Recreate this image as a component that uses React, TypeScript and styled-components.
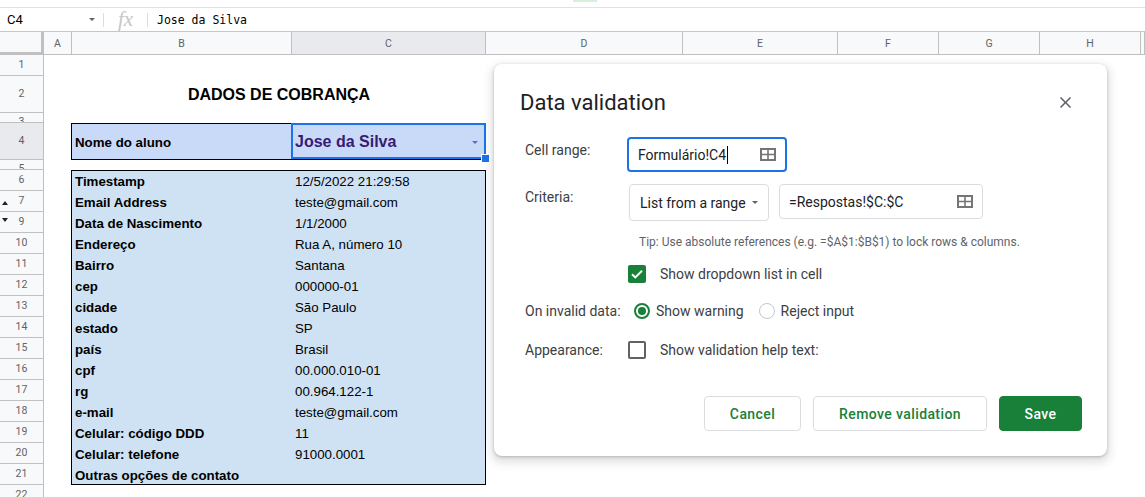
import React from 'react';
import styled, { createGlobalStyle } from 'styled-components';

const GlobalStyle = createGlobalStyle`
  html, body { margin: 0; padding: 0; background: #fff; }
  body { font-family: Roboto, "Liberation Sans", Arial, sans-serif; }
  * { box-sizing: border-box; }
`;

const Page = styled.div`
  position: relative;
  width: 1145px;
  height: 497px;
  overflow: hidden;
  background: #fff;
`;

const TopStrip = styled.div`
  height: 8px;
  border-bottom: 1px solid #e0e2e5;
  padding-left: 573px;
`;

const TabHint = styled.div`
  width: 24px;
  height: 2px;
  background: #d7eedd;
`;

const FormulaBar = styled.div`
  display: flex;
  align-items: center;
  height: 24px;
  border-bottom: 1px solid #c4c7c5;
`;

const NameBox = styled.div`
  width: 103px;
  display: flex;
  align-items: center;
  justify-content: space-between;
  padding: 0 8px 0 7px;
  font-family: Roboto, sans-serif;
  font-size: 13px;
  color: #000;
`;

const Caret = styled.span<{ $color?: string; $size?: number }>`
  width: 0;
  height: 0;
  border-left: ${p => p.$size ?? 3.5}px solid transparent;
  border-right: ${p => p.$size ?? 3.5}px solid transparent;
  border-top: ${p => p.$size ?? 3.5}px solid ${p => p.$color ?? '#5f6368'};
`;

const BarDivider = styled.div`
  width: 1px;
  height: 14px;
  background: #dadce0;
`;

const FxBox = styled.div`
  width: 43px;
  text-align: center;
  font-family: "Liberation Serif", "DejaVu Serif", serif;
  font-style: italic;
  font-size: 21px;
  line-height: 1;
  color: #c4c7ca;
`;

const FormulaText = styled.div`
  padding-left: 9px;
  font-family: "DejaVu Sans Mono", "Liberation Mono", monospace;
  font-size: 11.5px;
  color: #000;
`;

const Sheet = styled.div`
  display: grid;
  grid-template-columns: 44px 28px 220px 194px 197px 155px 101px 101px 101px 1fr;
  grid-template-rows: 23px 21px 37px 10px 37px 10px repeat(16, 21px);
  font-family: "Liberation Sans", Arial, sans-serif;
`;

const Corner = styled.div`
  grid-row: 1;
  grid-column: 1;
  background: #f8f9fa;
  border-right: 3px solid #c0c0c0;
  border-bottom: 3px solid #c0c0c0;
`;

const ColHead = styled.div<{ $selected?: boolean }>`
  grid-row: 1;
  display: flex;
  align-items: center;
  justify-content: center;
  overflow: hidden;
  background: ${p => (p.$selected ? '#e8eaed' : '#f8f9fa')};
  border-right: 1px solid #c0c0c0;
  border-bottom: 1px solid #c0c0c0;
  font-family: Roboto, sans-serif;
  font-size: 10.5px;
  color: #5f6368;
`;

const RowHead = styled.div<{ $row: number; $short?: boolean; $selected?: boolean }>`
  grid-column: 1;
  grid-row: ${p => p.$row};
  position: relative;
  display: flex;
  justify-content: center;
  align-items: ${p => (p.$short ? 'flex-start' : 'center')};
  padding-top: ${p => (p.$short ? '3px' : '0')};
  overflow: hidden;
  background: ${p => (p.$selected ? '#e8eaed' : '#f8f9fa')};
  border-right: 1px solid #c0c0c0;
  border-bottom: 1px solid #c0c0c0;
  font-family: Roboto, sans-serif;
  font-size: 10.5px;
  line-height: 12px;
  color: #5f6368;
`;

const HiddenRowArrow = styled.span<{ $dir: 'up' | 'down' }>`
  position: absolute;
  left: 2px;
  top: ${p => (p.$dir === 'up' ? '10px' : '6px')};
  width: 0;
  height: 0;
  border-left: 3px solid transparent;
  border-right: 3px solid transparent;
  ${p =>
    p.$dir === 'up'
      ? 'border-bottom: 4px solid #202124;'
      : 'border-top: 4px solid #202124;'}
`;

const TitleCell = styled.div`
  grid-column: 3 / 5;
  grid-row: 3;
  display: flex;
  align-items: center;
  justify-content: center;
  font-weight: bold;
  font-size: 16px;
  color: #000;
`;

const NameRow = styled.div`
  grid-column: 3 / 5;
  grid-row: 5;
  margin-left: -1px;
  display: grid;
  grid-template-columns: 221px 1fr;
  background: #c9daf8;
  outline: 1px solid #000;
  outline-offset: -1px;
`;

const NameLabel = styled.div`
  display: flex;
  align-items: center;
  padding: 1px 0 0 4px;
  font-weight: bold;
  font-size: 13.3px;
  color: #000;
`;

const NameValue = styled.div`
  position: relative;
  display: flex;
  align-items: center;
  justify-content: space-between;
  padding: 1px 8px 0 3px;
  font-weight: bold;
  font-size: 16px;
  color: #351c75;
`;

const SelectionRing = styled.div`
  position: absolute;
  top: 0;
  left: -1px;
  right: 0;
  bottom: 1px;
  border: 2px solid #1a73e8;
  pointer-events: none;
`;

const FillHandle = styled.div`
  position: absolute;
  right: -3px;
  bottom: -2px;
  width: 7px;
  height: 7px;
  background: #1a73e8;
  box-shadow: 0 0 0 1px #fff;
`;

const DataTable = styled.div`
  grid-column: 3 / 5;
  grid-row: 7 / 22;
  margin-left: -1px;
  display: grid;
  grid-template-columns: 221px 1fr;
  grid-auto-rows: 21px;
  background: #cfe2f3;
  outline: 1px solid #000;
  outline-offset: -1px;
`;

const DataCell = styled.div<{ $bold?: boolean }>`
  display: flex;
  align-items: center;
  padding: 1px 0 0 ${p => (p.$bold ? '4px' : '3px')};
  font-weight: ${p => (p.$bold ? 'bold' : 'normal')};
  font-size: 13.3px;
  color: #000;
  white-space: nowrap;
`;

/* ---------------- Dialog ---------------- */

const Dialog = styled.div`
  position: absolute;
  left: 494px;
  top: 64px;
  width: 613px;
  background: #fff;
  border-radius: 8px;
  box-shadow: 0 1px 3px rgba(60, 64, 67, 0.3), 0 4px 8px 3px rgba(60, 64, 67, 0.15);
  padding: 25px 25px 25px 26px;
  font-family: Roboto, sans-serif;
`;

const DialogHeader = styled.div`
  display: flex;
  align-items: center;
  justify-content: space-between;
  height: 28px;
`;

const DialogTitle = styled.div`
  font-size: 22px;
  line-height: 28px;
  color: #202124;
`;

const CloseButton = styled.div`
  display: flex;
  margin-right: 7px;
  margin-top: -2px;
`;

const Form = styled.div`
  display: flex;
  flex-direction: column;
  margin-top: 20px;
  padding-left: 5px;
`;

const FieldRow = styled.div<{ $gap?: number }>`
  display: grid;
  grid-template-columns: 102px 1fr;
  align-items: start;
  margin-top: ${p => p.$gap ?? 0}px;
`;

const FieldLabel = styled.div<{ $pad?: number }>`
  font-size: 14px;
  line-height: 20px;
  color: #3c4043;
  padding-top: ${p => p.$pad ?? 0}px;
`;

const Controls = styled.div`
  display: flex;
  align-items: center;
`;

const RangeInput = styled.div<{ $focused?: boolean; $width: number }>`
  width: ${p => p.$width}px;
  height: 35px;
  display: flex;
  align-items: center;
  justify-content: space-between;
  border: ${p => (p.$focused ? '2px solid #1a73e8' : '1px solid #dadce0')};
  border-radius: 4px;
  padding: 0 9px;
  font-size: 14px;
  color: #202124;
`;

const InputText = styled.span`
  display: flex;
  align-items: center;
`;

const TextCursor = styled.span`
  display: inline-block;
  width: 1px;
  height: 18px;
  margin-left: 1px;
  background: #000;
`;

const SelectBox = styled.div`
  width: 140px;
  height: 37px;
  margin-left: 2px;
  margin-right: 10px;
  display: flex;
  align-items: center;
  justify-content: space-between;
  border: 1px solid #dadce0;
  border-radius: 4px;
  padding: 0 10px;
  font-size: 14px;
  color: #202124;
`;

const CriteriaControls = styled(Controls)`
  align-items: flex-start;
`;

const Tip = styled.div`
  padding-left: 12px;
  font-size: 12px;
  line-height: 16px;
  color: #5f6368;
`;

const OptionLine = styled.label<{ $indent?: number; $gap?: number }>`
  display: flex;
  align-items: center;
  height: 20px;
  margin-left: ${p => p.$indent ?? 0}px;
  gap: ${p => p.$gap ?? 14}px;
  font-size: 14px;
  color: #3c4043;
`;

const CheckBox = styled.span<{ $checked?: boolean }>`
  width: 18px;
  height: 18px;
  border-radius: 2px;
  display: flex;
  align-items: center;
  justify-content: center;
  background: ${p => (p.$checked ? '#188038' : '#fff')};
  border: ${p => (p.$checked ? 'none' : '2px solid #5f6368')};
`;

const RadioGroup = styled.div`
  display: flex;
  align-items: center;
  gap: 15px;
`;

const Radio = styled.span<{ $checked?: boolean }>`
  width: 16px;
  height: 16px;
  border-radius: 50%;
  display: flex;
  align-items: center;
  justify-content: center;
  border: ${p => (p.$checked ? '2px solid #188038' : '1.5px solid #c4c7ca')};

  &::after {
    content: '';
    display: ${p => (p.$checked ? 'block' : 'none')};
    width: 8px;
    height: 8px;
    border-radius: 50%;
    background: #188038;
  }
`;

const ButtonBar = styled.div`
  display: flex;
  justify-content: flex-end;
  gap: 12px;
  margin-top: 36px;
`;

const Button = styled.div<{ $primary?: boolean; $width: number }>`
  width: ${p => p.$width}px;
  height: 35px;
  display: flex;
  align-items: center;
  justify-content: center;
  border-radius: 4px;
  font-size: 14px;
  font-weight: 500;
  letter-spacing: 0.4px;
  background: ${p => (p.$primary ? '#188038' : '#fff')};
  color: ${p => (p.$primary ? '#fff' : '#188038')};
  border: 1px solid ${p => (p.$primary ? '#188038' : '#dadce0')};
`;

/* ---------------- Icons ---------------- */

const RangeIcon = () => (
  <svg width="16" height="13" viewBox="0 0 16 13">
    <rect x="1" y="1" width="14" height="11" fill="none" stroke="#757575" strokeWidth="2" />
    <path d="M8 1v11M1 6.5h14" stroke="#757575" strokeWidth="1.6" />
  </svg>
);

const CloseIcon = () => (
  <svg width="19" height="19" viewBox="0 0 24 24">
    <path
      fill="#5f6368"
      d="M19 6.41L17.59 5 12 10.59 6.41 5 5 6.41 10.59 12 5 17.59 6.41 19 12 13.41 17.59 19 19 17.59 13.41 12z"
    />
  </svg>
);

const CheckMark = () => (
  <svg width="18" height="18" viewBox="0 0 18 18">
    <path d="M4 9.2l3.3 3.2L14 5.8" fill="none" stroke="#fff" strokeWidth="2" />
  </svg>
);

/* ---------------- Data ---------------- */

const COLUMNS = ['A', 'B', 'C', 'D', 'E', 'F', 'G', 'H', ''];

type RowDef = { n: string; short?: boolean; selected?: boolean; arrow?: 'up' | 'down' };

const ROWS: RowDef[] = [
  { n: '1' },
  { n: '2' },
  { n: '3', short: true },
  { n: '4', selected: true },
  { n: '5', short: true },
  { n: '6' },
  { n: '7', arrow: 'up' },
  { n: '9', arrow: 'down' },
  ...Array.from({ length: 13 }, (_, i) => ({ n: String(10 + i) })),
];

const DATA: [string, string][] = [
  ['Timestamp', '12/5/2022 21:29:58'],
  ['Email Address', 'teste@gmail.com'],
  ['Data de Nascimento', '1/1/2000'],
  ['Endereço', 'Rua A, número 10'],
  ['Bairro', 'Santana'],
  ['cep', '000000-01'],
  ['cidade', 'São Paulo'],
  ['estado', 'SP'],
  ['país', 'Brasil'],
  ['cpf', '00.000.010-01'],
  ['rg', '00.964.122-1'],
  ['e-mail', 'teste@gmail.com'],
  ['Celular: código DDD', '11'],
  ['Celular: telefone', '91000.0001'],
  ['Outras opções de contato', ''],
];

export default function App() {
  return (
    <Page>
      <GlobalStyle />
      <TopStrip>
        <TabHint />
      </TopStrip>
      <FormulaBar>
        <NameBox>
          <span>C4</span>
          <Caret />
        </NameBox>
        <BarDivider />
        <FxBox>fx</FxBox>
        <BarDivider />
        <FormulaText>Jose da Silva</FormulaText>
      </FormulaBar>

      <Sheet>
        <Corner />
        {COLUMNS.map((c, i) => (
          <ColHead key={i} $selected={c === 'C'}>
            {c}
          </ColHead>
        ))}
        {ROWS.map((r, i) => (
          <RowHead key={r.n} $row={i + 2} $short={r.short} $selected={r.selected}>
            {r.arrow && <HiddenRowArrow $dir={r.arrow} />}
            {r.n}
          </RowHead>
        ))}

        <TitleCell>DADOS DE COBRANÇA</TitleCell>

        <NameRow>
          <NameLabel>Nome do aluno</NameLabel>
          <NameValue>
            <span>Jose da Silva</span>
            <Caret $color="#5f6fbf" />
            <SelectionRing />
            <FillHandle />
          </NameValue>
        </NameRow>

        <DataTable>
          {DATA.map(([k, v]) => (
            <React.Fragment key={k}>
              <DataCell $bold>{k}</DataCell>
              <DataCell>{v}</DataCell>
            </React.Fragment>
          ))}
        </DataTable>
      </Sheet>

      <Dialog>
        <DialogHeader>
          <DialogTitle>Data validation</DialogTitle>
          <CloseButton>
            <CloseIcon />
          </CloseButton>
        </DialogHeader>

        <Form>
          <FieldRow>
            <FieldLabel $pad={3}>Cell range:</FieldLabel>
            <Controls>
              <RangeInput $focused $width={160}>
                <InputText>
                  Formulário!C4
                  <TextCursor />
                </InputText>
                <RangeIcon />
              </RangeInput>
            </Controls>
          </FieldRow>

          <FieldRow $gap={12}>
            <FieldLabel $pad={3}>Criteria:</FieldLabel>
            <CriteriaControls>
              <SelectBox>
                <span>List from a range</span>
                <Caret />
              </SelectBox>
              <RangeInput $width={204}>
                <InputText>=Respostas!$C:$C</InputText>
                <RangeIcon />
              </RangeInput>
            </CriteriaControls>
          </FieldRow>

          <FieldRow $gap={13}>
            <span />
            <Tip>Tip: Use absolute references (e.g. =$A$1:$B$1) to lock rows &amp; columns.</Tip>
          </FieldRow>

          <FieldRow $gap={14}>
            <span />
            <OptionLine $indent={1}>
              <CheckBox $checked>
                <CheckMark />
              </CheckBox>
              Show dropdown list in cell
            </OptionLine>
          </FieldRow>

          <FieldRow $gap={17}>
            <FieldLabel>On invalid data:</FieldLabel>
            <RadioGroup>
              <OptionLine $indent={7} $gap={6}>
                <Radio $checked />
                Show warning
              </OptionLine>
              <OptionLine $gap={6}>
                <Radio />
                Reject input
              </OptionLine>
            </RadioGroup>
          </FieldRow>

          <FieldRow $gap={19}>
            <FieldLabel>Appearance:</FieldLabel>
            <OptionLine $indent={1}>
              <CheckBox />
              Show validation help text:
            </OptionLine>
          </FieldRow>
        </Form>

        <ButtonBar>
          <Button $width={97}>Cancel</Button>
          <Button $width={174}>Remove validation</Button>
          <Button $primary $width={83}>
            Save
          </Button>
        </ButtonBar>
      </Dialog>
    </Page>
  );
}
